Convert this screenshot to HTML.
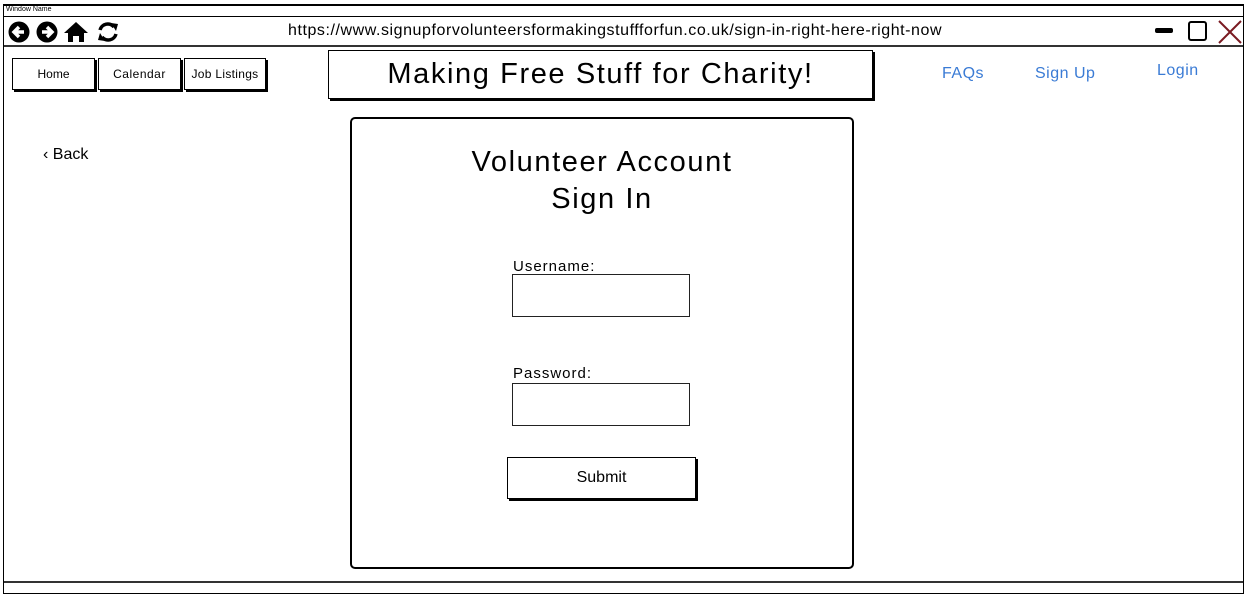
<!DOCTYPE html>
<html><head><meta charset="utf-8"><style>
*{margin:0;padding:0;box-sizing:border-box}
body{width:1247px;height:602px;background:#fff;position:relative;overflow:hidden;font-family:"Liberation Sans",sans-serif;color:#000}
.a{position:absolute}
.hl{position:absolute;height:0;border-top:1px solid #000}
.btn{position:absolute;border:1px solid #000;box-shadow:2px 2px 0 #000;background:#fff;text-align:center;font-size:12px}
.lnk{position:absolute;color:#3a7bd5;font-size:16px}
.inp{position:absolute;border:1px solid #222;background:#fff;width:178px;height:43px;left:512px}
.lbl{position:absolute;font-size:15px;left:513px;letter-spacing:1px}
</style></head><body>
<div class="a" style="left:3px;top:4px;width:1241px;height:590px;border:1px solid #000;border-top:2px solid #000"></div>
<div class="a" style="left:6px;top:6px;font-size:7px">Window Name</div>
<div class="hl" style="left:4px;top:16px;width:1239px"></div>
<div class="hl" style="left:4px;top:45px;width:1239px;border-top:2px solid #333"></div>
<svg class="a" style="left:8px;top:20px" width="115" height="24" viewBox="0 0 115 24">
<circle cx="11" cy="12" r="10.5" fill="#000"/><path d="M16 12H6.5M11 7L6 12L11 17" stroke="#fff" stroke-width="3.5" fill="none"/>
<circle cx="39" cy="12" r="10.5" fill="#000"/><path d="M34 12H43.5M39 7L44 12L39 17" stroke="#fff" stroke-width="3.5" fill="none"/>
<path d="M56 13L68 2L80 13H76V22H71V16H65V22H60V13Z" fill="#000"/>
<path d="M92 10A8 8 0 0 1 106 7M108 14A8 8 0 0 1 94 17" stroke="#000" stroke-width="3.5" fill="none"/><path d="M103 3L110 4L108 11Z M97 21L90 20L92 13Z" fill="#000"/>
</svg>
<div class="a" style="left:288px;top:22px;font-size:16px;letter-spacing:0.56px">https://www.signupforvolunteersformakingstuffforfun.co.uk/sign-in-right-here-right-now</div>
<div class="a" style="left:1155px;top:28px;width:18px;height:5px;background:#000;border-radius:2px"></div>
<div class="a" style="left:1188px;top:21px;width:19px;height:20px;border:2px solid #000;border-radius:3px"></div>
<svg class="a" style="left:1217px;top:19px" width="26" height="26"><path d="M2 2L24 24M24 2L2 24" stroke="#7a1a22" stroke-width="2"/></svg>
<div class="btn" style="left:12px;top:58px;width:83px;height:32px;line-height:30px">Home</div>
<div class="btn" style="left:98px;top:58px;width:83px;height:32px;line-height:30px;letter-spacing:0.5px">Calendar</div>
<div class="btn" style="left:184px;top:58px;width:82px;height:32px;line-height:30px;letter-spacing:0.3px">Job Listings</div>
<div class="btn" style="left:328px;top:50px;width:545px;height:49px;line-height:47px;font-size:29px;letter-spacing:1.6px">Making Free Stuff for Charity!</div>
<div class="lnk" style="left:942px;top:65px;letter-spacing:0.5px">FAQs</div>
<div class="lnk" style="left:1035px;top:65px;letter-spacing:0.5px">Sign Up</div>
<div class="lnk" style="left:1157px;top:62px;letter-spacing:0.5px">Login</div>
<div class="a" style="left:43px;top:146px;font-size:16px">‹ Back</div>
<div class="a" style="left:350px;top:117px;width:504px;height:452px;border:2px solid #000;border-radius:5px"></div>
<div class="a" style="left:350px;top:144px;width:504px;text-align:center;font-size:29px;line-height:37px;letter-spacing:1.6px">Volunteer Account<br>Sign In</div>
<div class="lbl" style="top:258px">Username:</div>
<div class="inp" style="top:274px"></div>
<div class="lbl" style="top:365px">Password:</div>
<div class="inp" style="top:383px"></div>
<div class="btn" style="left:507px;top:457px;width:189px;height:42px;line-height:40px;font-size:16px">Submit</div>
<div class="hl" style="left:4px;top:581px;width:1239px;border-top:2px solid #333"></div>
</body></html>
